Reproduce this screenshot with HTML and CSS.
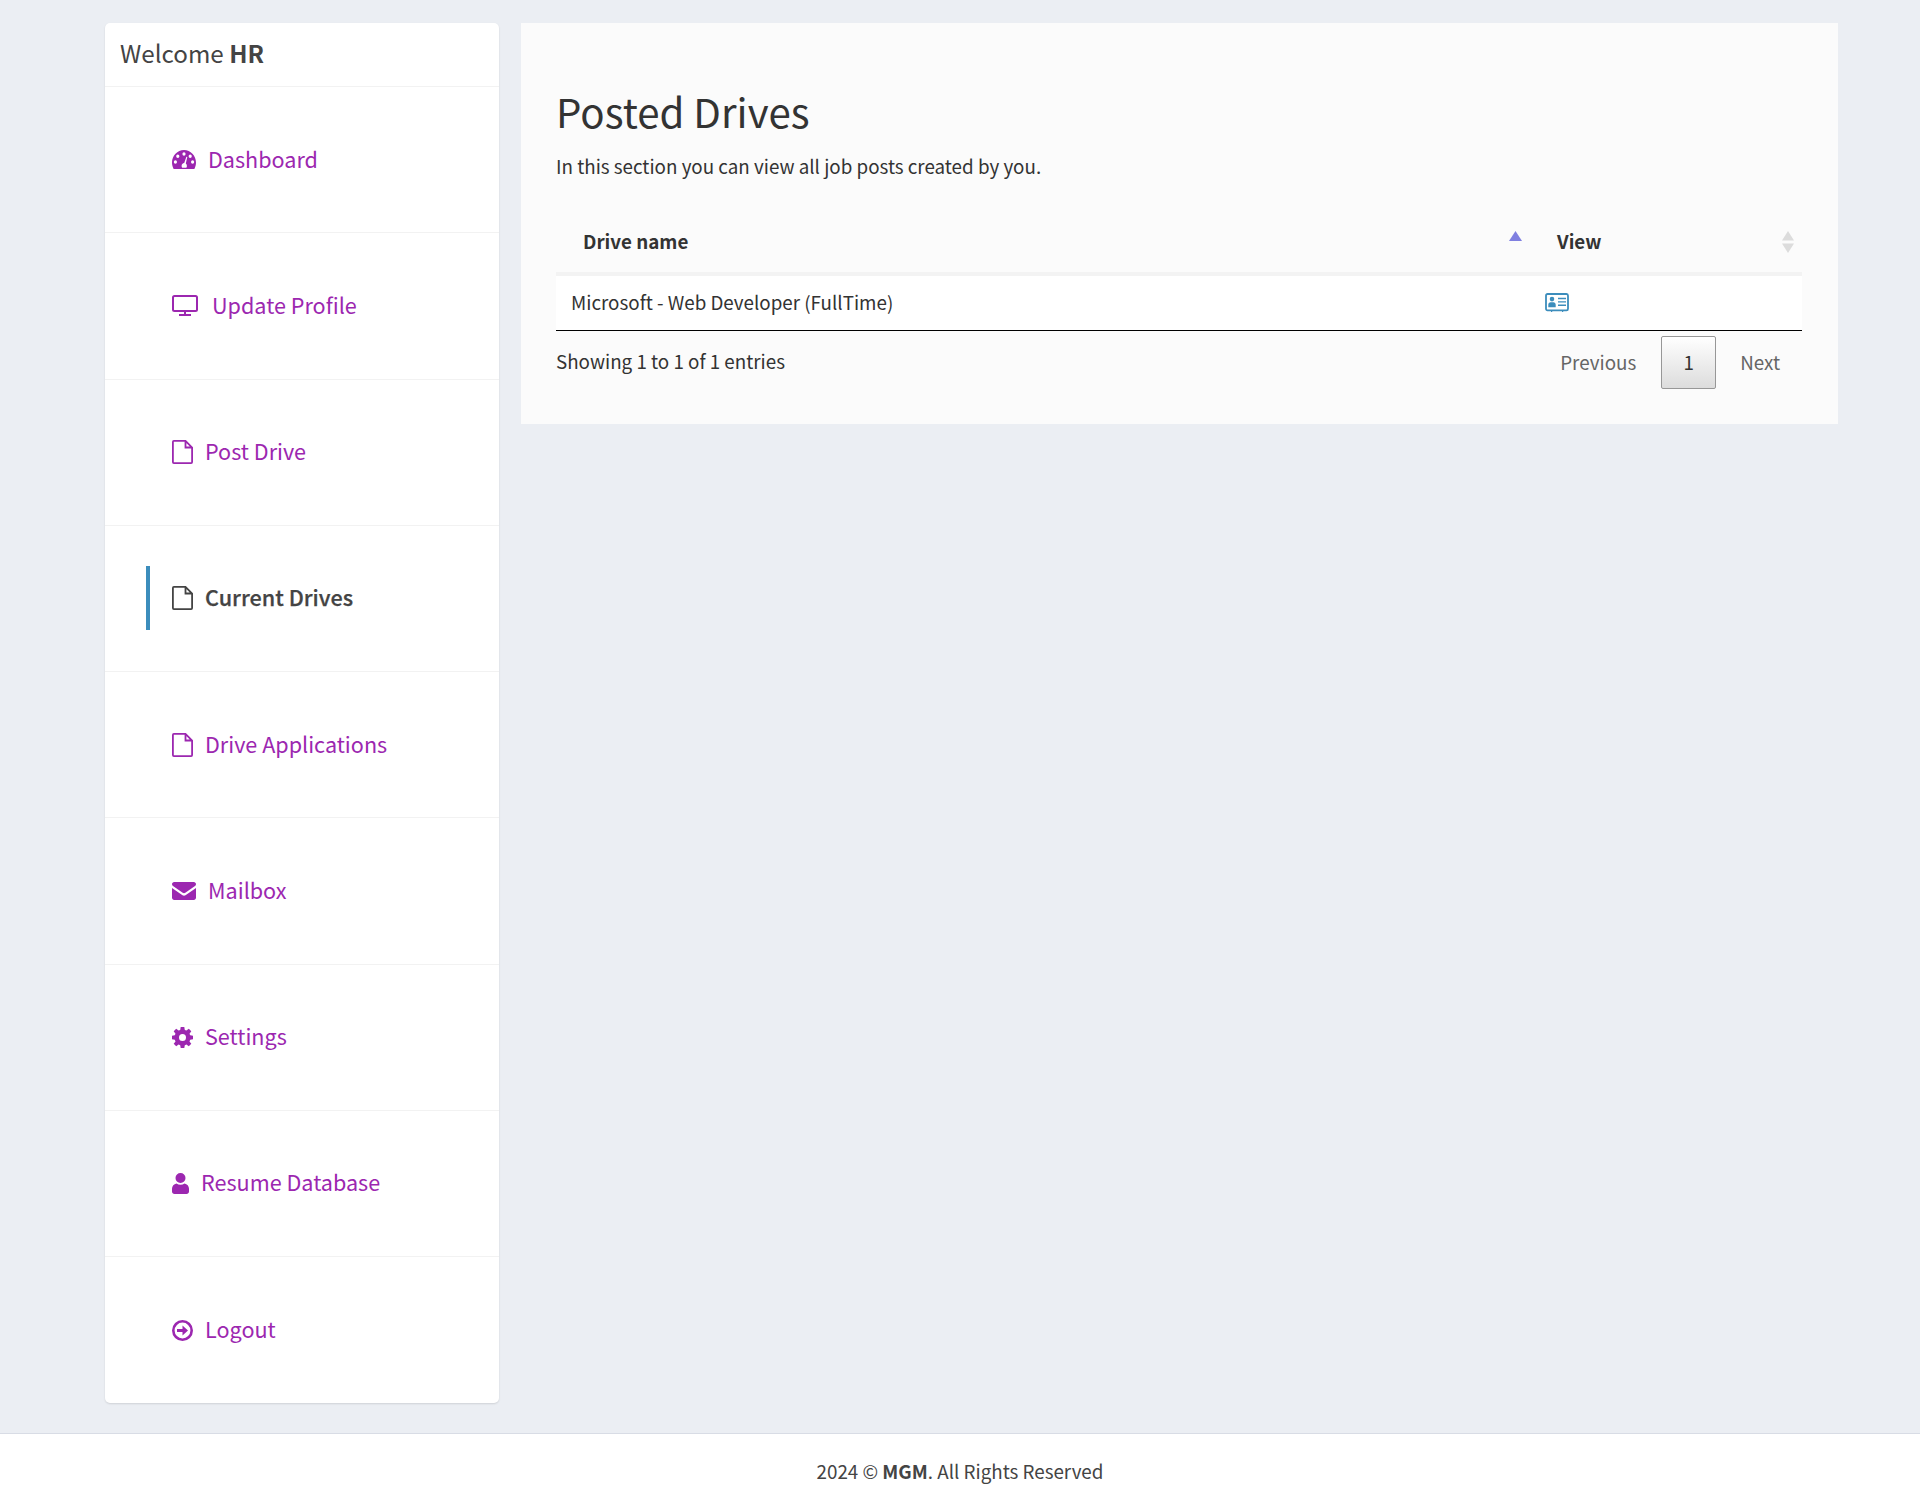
FILE: index.html
```html
<!doctype html>
<html>
<head>
<meta charset="utf-8">
<title>Posted Drives</title>
<link rel="stylesheet" href="styles.css">
</head>

<body>
	<div class="page">
		<div class="sidebar">
			<div class="welcome">Welcome <b>HR</b></div>
			<ul class="menu">
				<li><a href="#">
					<svg class="ico ico-dash" viewBox="0 0 24 18" preserveAspectRatio="none"><path fill="currentColor" fill-rule="evenodd" d="M12 0C5.400 0 0 5.300 0 11.900c0 2 .5 4 1.400 5.600.1.300.4.500.8.500h19.600c.4 0 .7-.2.8-.5.9-1.600 1.400-3.600 1.400-5.600C24 5.300 18.600 0 12 0zM12 2.200a1.600 1.600 0 1 1 0 3.200 1.600 1.600 0 0 1 0-3.200zM5.800 4.300a1.600 1.600 0 1 1 0 3.200 1.600 1.600 0 0 1 0-3.200zM18.200 4.300a1.600 1.600 0 1 1 0 3.200 1.600 1.600 0 0 1 0-3.200zM3.400 9.800a1.600 1.600 0 1 1 0 3.200 1.600 1.600 0 0 1 0-3.200zM20.600 9.800a1.600 1.600 0 1 1 0 3.200 1.600 1.600 0 0 1 0-3.200zM14.400 6.400l.9.300-1.500 6.200c.7.500 1.100 1.300 1.100 2.200 0 .6-.2 1.200-.6 1.700H10.200c-.4-.5-.6-1.100-.6-1.700 0-1.500 1.100-2.700 2.600-2.800z"/></svg>
					<span>Dashboard</span></a></li>
				<li><a href="#">
					<svg class="ico ico-mon" viewBox="0 0 26 21"><path fill="none" stroke="currentColor" stroke-width="2" d="M2.500 1h21c.8 0 1.500.7 1.500 1.500v12c0 .8-.7 1.500-1.500 1.500h-21c-.8 0-1.500-.7-1.500-1.500v-12C1 1.700 1.700 1 2.500 1z"/><path fill="currentColor" d="M12 16h2v3h-2zM7 19h12v2H7z"/></svg>
					<span>Update Profile</span></a></li>
				<li><a href="#">
					<svg class="ico ico-file" viewBox="0 0 21 24"><path class="file-line" d="M1.900.9h11.600l6.600 6.600v14.600c0 .6-.4 1-1 1H1.900c-.6 0-1-.4-1-1V1.900c0-.6.4-1 1-1zM13.500.9v6.600h6.600"/></svg>
					<span>Post Drive</span></a></li>
				<li class="active"><a href="#">
					<svg class="ico ico-file" viewBox="0 0 21 24"><path class="file-line" d="M1.900.9h11.600l6.600 6.600v14.600c0 .6-.4 1-1 1H1.900c-.6 0-1-.4-1-1V1.900c0-.6.4-1 1-1zM13.500.9v6.600h6.600"/></svg>
					<span>Current Drives</span></a></li>
				<li><a href="#">
					<svg class="ico ico-file" viewBox="0 0 21 24"><path class="file-line" d="M1.900.9h11.600l6.600 6.600v14.600c0 .6-.4 1-1 1H1.900c-.6 0-1-.4-1-1V1.900c0-.6.4-1 1-1zM13.500.9v6.600h6.600"/></svg>
					<span>Drive Applications</span></a></li>
				<li><a href="#">
					<svg class="ico ico-mail" viewBox="0 0 24 18"><path fill="currentColor" d="M2.200 0h19.600C23 0 24 1 24 2.200c0 .8-.4 1.400-1 1.800l-9.700 6.800c-.8.500-1.800.500-2.600 0L1 4C.4 3.600 0 3 0 2.200 0 1 1 0 2.200 0zM0 6l10.500 7.200c.9.600 2.100.6 3 0L24 6v9.800c0 1.200-1 2.200-2.200 2.200H2.200C1 18 0 17 0 15.800z"/></svg>
					<span>Mailbox</span></a></li>
				<li><a href="#">
					<svg class="ico ico-round" viewBox="0 0 21 21"><path fill="currentColor" fill-rule="evenodd" d="M8.700 0h3.600l.5 2.900 1.600.7L16.800 1.800l2.500 2.500-1.800 2.400.7 1.600L21 8.800v3.500l-2.800.5-.7 1.600 1.800 2.400-2.500 2.500-2.400-1.800-1.600.7-.5 2.800H8.700l-.5-2.800-1.600-.7-2.400 1.800-2.500-2.500 1.800-2.400-.7-1.600L0 12.300V8.800l2.800-.5.7-1.600-1.800-2.400 2.500-2.500 2.400 1.800 1.600-.7zM10.500 7a3.500 3.500 0 1 0 0 7 3.500 3.500 0 0 0 0-7z"/></svg>
					<span>Settings</span></a></li>
				<li><a href="#">
					<svg class="ico ico-user" viewBox="0 0 17 21"><path fill="currentColor" d="M8.500 0a5 5 0 1 1 0 10 5 5 0 0 1 0-10zM4.500 10.500c1.100.8 2.500 1.200 4 1.200s2.900-.4 4-1.200c2.600.5 4.500 2.600 4.500 5.300v2.700c0 1.400-1.100 2.500-2.500 2.500h-12C1.100 21 0 19.900 0 18.500v-2.700c0-2.700 1.900-4.800 4.500-5.300z"/></svg>
					<span>Resume Database</span></a></li>
				<li><a href="#">
					<svg class="ico ico-round" viewBox="0 0 21 21"><circle cx="10.500" cy="10.500" r="9.200" fill="none" stroke="currentColor" stroke-width="2.600"/><path fill="currentColor" d="M5 9h5.500V5.500l5.500 5-5.500 5V12H5z"/></svg>
					<span>Logout</span></a></li>
			</ul>
		</div>

		<div class="panel">
			<h1>Posted Drives</h1>
			<p class="intro">In this section you can view all job posts created by you.</p>
			<table class="drives">
				<thead>
					<tr>
						<th class="col-name"><div class="th-in">Drive name
							<svg class="sort-asc" viewBox="0 0 13 10"><path fill="#7f7fe0" d="M6.500 0L13 10H0z"/></svg></div></th>
						<th class="col-view"><div class="th-in">View
							<svg class="sort-both" viewBox="0 0 12 22"><path fill="#dcdcdc" d="M6 0l6 9.500H0zM0 12.500h12L6 22z"/></svg></div></th>
					</tr>
				</thead>
				<tbody>
					<tr>
						<td>Microsoft - Web Developer (FullTime)</td>
						<td><svg class="vcard" viewBox="0 0 24 18" preserveAspectRatio="none"><rect x="1" y="1" width="22" height="15.500" rx="1.500" fill="#fff" stroke="#3c8dbc" stroke-width="1.800"/><path fill="#3c8dbc" d="M7 3.500a2.300 2.300 0 1 1 0 4.600 2.300 2.300 0 0 1 0-4.600zM3.300 13.500v-2.300c0-1.300 1-2.400 2.300-2.400h2.800c1.300 0 2.300 1.100 2.300 2.400v2.300zM13 4.500h8v1.400h-8zM13 7.700h8v1.400h-8zM13 10.900h8v1.400h-8zM6 16h1.200v2H6zM17 16h1.200v2H17z"/></svg></td>
					</tr>
				</tbody>
			</table>
			<div class="under">
				<div class="info">Showing 1 to 1 of 1 entries</div>
				<div class="pager">
					<a href="#">Previous</a>
					<a href="#" class="current">1</a>
					<a href="#">Next</a>
				</div>
			</div>
		</div>
	</div>

	<div class="footer">2024 © <b>MGM</b>. All Rights Reserved</div>
</body>

</html>
```

FILE: styles.css
```css
body{
	margin: 0;
	background-color: #ebeef3;
	color: #333;
	font-family: "Noto Sans CJK SC", "Noto Sans", sans-serif;
	font-size: 18.8px;
}
a{
	text-decoration: none;
}
.page{
	display: flex;
	align-items: flex-start;
	gap: 22px;
	padding: 23px 82px 0 105px;
	height: 1433px;
	box-sizing: border-box;
}

/* sidebar */
.sidebar{
	width: 394px;
	flex: none;
	background: #fff;
	border-radius: 5px;
	box-shadow: 0 1px 2px rgba(0,0,0,.12);
}
.welcome{
	height: 64px;
	box-sizing: border-box;
	border-bottom: 1px solid #f2f2f2;
	padding-left: 15px;
	font-size: 24.2px;
	line-height: 60px;
	color: #444;
}
.menu{
	list-style: none;
	margin: 0;
	padding: 0;
}
.menu li{
	height: 146.25px;
	box-sizing: border-box;
	border-bottom: 1px solid #f2f2f2;
	display: flex;
	align-items: center;
	padding-left: 41px;
}
.menu li:last-child{
	border-bottom: none;
}
.menu a{
	display: flex;
	align-items: center;
	height: 64px;
	border-left: 4px solid transparent;
	padding-left: 22px;
	font-size: 21.6px;
	color: #9c27b0;
}
.menu span{
	padding-bottom: 3px;
}
.menu .active a{
	border-left-color: #3c8dbc;
	color: #444;
	font-weight: 500;
	-webkit-text-stroke: .25px #444;
}
.ico{
	flex: none;
	margin-right: 12px;
}
.ico-dash{
	width: 24px;
	height: 19px;
}
.ico-mon{
	width: 26px;
	height: 21px;
	margin-right: 14px;
}
.ico-file{
	width: 21px;
	height: 24px;
}
.file-line{
	fill: none;
	stroke: currentColor;
	stroke-width: 1.800;
}
.ico-round{
	width: 21px;
	height: 21px;
}
.ico-mail{
	width: 24px;
	height: 18px;
}
.ico-user{
	width: 17px;
	height: 21px;
}

/* main panel */
.panel{
	flex: 1;
	background: #fbfbfb;
	padding: 58px 36px 35px 35px;
	height: 401px;
	box-sizing: border-box;
}
h1{
	margin: 0;
	font-size: 40.2px;
	font-weight: 400;
	line-height: 60px;
	color: #333;
}
.intro{
	margin: 11px 0 0;
	line-height: 28px;
}
.drives{
	width: 100%;
	margin-top: 36px;
	border-collapse: collapse;
}
.drives th{
	box-sizing: border-box;
	height: 58px;
	padding: 0 8px 7px 27px;
	border-bottom: 4px solid #f3f3f3;
	text-align: left;
	font-weight: 700;
}
.th-in{
	display: flex;
	align-items: center;
	justify-content: space-between;
}
.col-name{
	width: 974px;
}
.sort-asc{
	width: 13px;
	height: 10px;
	margin-bottom: 9px;
}
.sort-both{
	width: 12px;
	height: 22px;
	margin-top: 3px;
}
.drives td{
	height: 50px;
	padding: 0 15px 4px;
	background: #fff;
	border-bottom: 1px solid #000;
}
.vcard{
	width: 24px;
	height: 19px;
	display: block;
	margin-top: 2px;
}
.under{
	display: flex;
	justify-content: space-between;
	align-items: flex-start;
}
.info{
	padding-top: 16px;
	line-height: 28px;
}
.pager{
	display: flex;
	align-items: center;
	padding: 5px 22px 0 0;
}
.pager a{
	color: #666;
	padding-bottom: 2px;
}
.pager .current{
	width: 55px;
	height: 53px;
	box-sizing: border-box;
	margin: 0 24px 0 25px;
	padding-bottom: 0;
	border: 1px solid #979797;
	border-radius: 2px;
	background: linear-gradient(to bottom, #fff, #dcdcdc);
	color: #333;
	text-align: center;
	line-height: 49px;
}

.footer{
	height: 76px;
	box-sizing: border-box;
	border-top: 1px solid #d8dce5;
	background: #fff;
	text-align: center;
	line-height: 73px;
	color: #444;
}
```
